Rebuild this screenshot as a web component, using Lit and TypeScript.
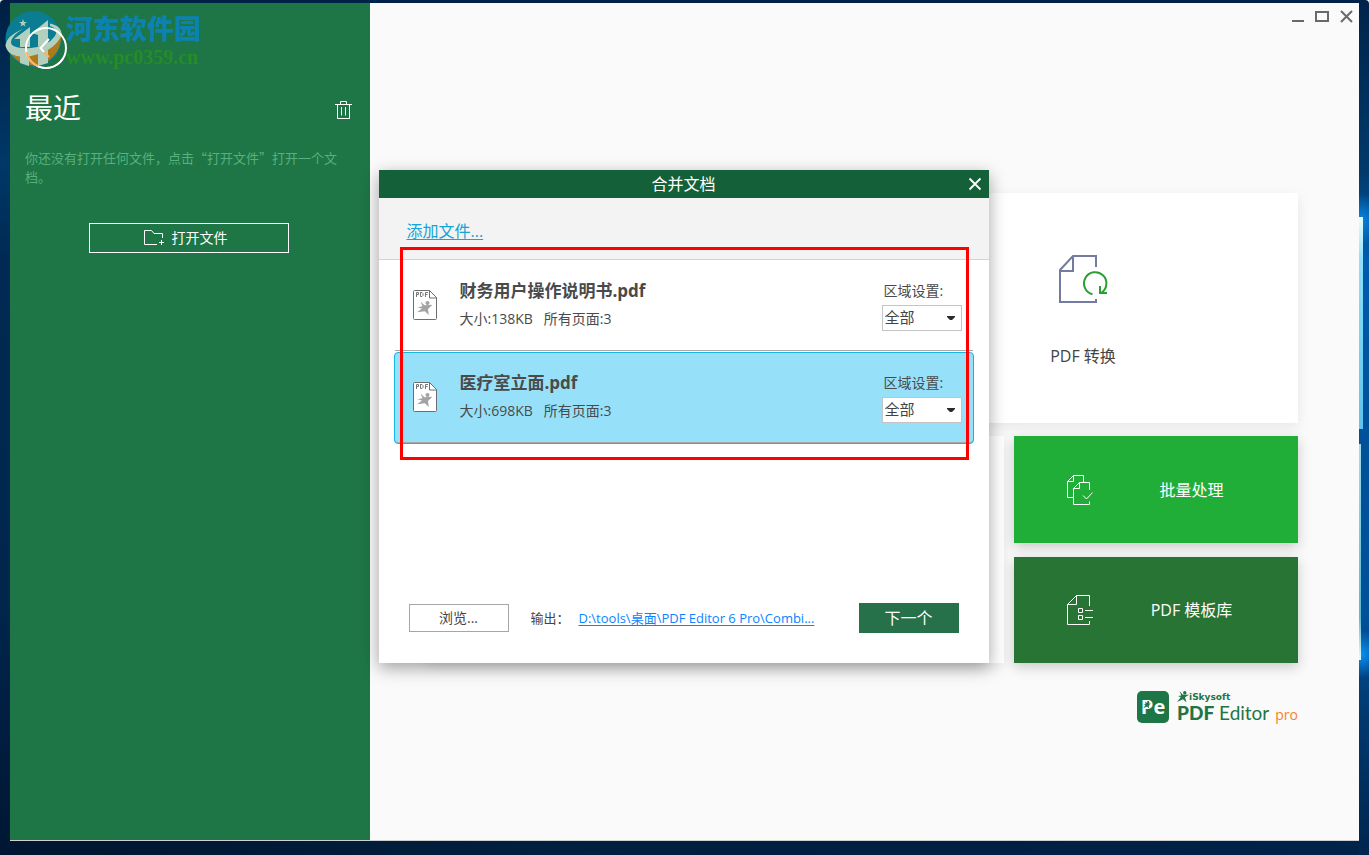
import { LitElement, html, css, svg } from "lit";
import { customElement, property, state } from "lit/decorators.js";
import { classMap } from "lit/directives/class-map.js";

interface PdfFile {
  name: string;
  size: string;
  pages: number;
}

const pdfIcon = svg`
  <svg width="26" height="32" viewBox="0 0 26 32" aria-hidden="true">
    <path d="M2.5 1.5H17.5L24.5 8.5V29.5Q24.5 30.5 23.5 30.5H2.5Q1.5 30.5 1.5 29.5V2.5Q1.5 1.5 2.5 1.5Z" fill="#fff" stroke="#6e6e6e"/>
    <path d="M17.5 1.5V9H24.5" fill="none" stroke="#6e6e6e"/>
    <g fill="none" stroke="#777" stroke-width="1">
      <path d="M4.5 8V3.5H6.5V5.5H4.5"/>
      <path d="M8.5 3V7.5H10L11 6.5V4.5L10 3.5H8.5"/>
      <path d="M13.5 8V3.5H16M13.5 5.5H15.500"/>
    </g>
    <circle cx="15.5" cy="14" r="2" fill="#a3a3a3"/>
    <path d="M8.500 12.500L12.500 16.300L20.500 15.800L16 20L16.800 26L12.800 22.300L5 23.200L10 19.400L5.500 18.200L10.500 17.200Z" fill="#a3a3a3"/>
  </svg>`;

const runner = (size: number) => svg`
  <svg width=${size} height=${size} viewBox="0 0 12 12" aria-hidden="true">
    <circle cx="7.800" cy="1.800" r="1.700" fill="#1e7545"/>
    <path d="M2.500 0L5.500 3.600L12 3.800L8 6.300L9.500 11.500L6 8.300L0 11L3.800 6.300L1 5L4.300 4.400Z" fill="#1e7545"/>
  </svg>`;

@customElement("file-row")
export class FileRow extends LitElement {
  @property({ attribute: false }) file!: PdfFile;
  @property({ type: Boolean }) selected = false;

  static styles = css`
    :host {
      display: block;
      color: #4a4a4a;
      font: 14px/20px "Open Sans", "Noto Sans CJK SC", sans-serif;
    }
    .row {
      display: flex;
      align-items: flex-start;
      box-sizing: border-box;
      height: 92px;
      padding: 28px 11px 0 17px;
      border: 1px solid transparent;
      box-shadow: inset 0 -1px #a8a8a8;
    }
    .row.selected {
      background: #96e1f9;
      border-color: #1cb4e4;
      border-radius: 4px;
    }
    .row svg {
      flex: none;
    }
    .info {
      flex: 1;
      min-width: 0;
      padding-left: 22px;
    }
    .name {
      margin: -10px 0 6px;
      font-size: 17px;
      line-height: 24px;
      font-weight: 700;
    }
    .meta {
      margin: 0;
      white-space: pre;
    }
    .range {
      display: flex;
      flex-direction: column;
      width: 80px;
      margin-top: -8px;
    }
    .range label {
      padding-left: 2px;
      margin-bottom: 4px;
    }
    .pick {
      display: grid;
      align-items: center;
      background: #fff;
      border: 1px solid #c4c4c4;
    }
    .pick select,
    .pick svg {
      grid-area: 1 / 1;
    }
    .pick svg {
      justify-self: end;
      margin-right: 6px;
      pointer-events: none;
    }
    select {
      appearance: none;
      width: 100%;
      height: 24px;
      margin: 0;
      padding: 0 20px 3px 2px;
      border: 0;
      border-radius: 0;
      background: none;
      color: #444;
      font: 15px/20px "Noto Sans CJK SC", sans-serif;
    }
  `;

  render() {
    return html`
      <div class=${classMap({ row: true, selected: this.selected })}>
        ${pdfIcon}
        <div class="info">
          <h3 class="name">${this.file.name}</h3>
          <p class="meta">${`大小:${this.file.size}   所有页面:${this.file.pages}`}</p>
        </div>
        <div class="range">
          <label for="range">区域设置:</label>
          <span class="pick">
            <select id="range"><option>全部</option></select>
            <svg width="8" height="4" viewBox="0 0 8 4" aria-hidden="true"><path d="M0 0H8V1L5 4H3L0 1Z" fill="#2b2b2b"/></svg>
          </span>
        </div>
      </div>
    `;
  }
}

@customElement("merge-dialog")
export class MergeDialog extends LitElement {
  @state() private selected = 1;

  private files: PdfFile[] = [
    { name: "财务用户操作说明书.pdf", size: "138KB", pages: 3 },
    { name: "医疗室立面.pdf", size: "698KB", pages: 3 },
  ];

  static styles = css`
    :host {
      position: relative;
      display: flex;
      flex-direction: column;
      width: 610px;
      max-width: 100%;
      background: #fff;
      box-shadow: 0 5px 16px rgba(0, 0, 0, 0.36);
      color: #444;
      font: 14px/20px "Open Sans", "Noto Sans CJK SC", sans-serif;
    }
    button {
      margin: 0;
      padding: 0;
      border: 0;
      border-radius: 0;
      background: none;
      font-family: inherit;
      cursor: pointer;
    }
    .head {
      display: grid;
      grid-template-columns: 28px 1fr 28px;
      align-items: center;
      height: 28px;
      background: #146038;
      color: #fff;
    }
    .head h2 {
      grid-column: 2;
      margin: 0;
      text-align: center;
      font-size: 16px;
      line-height: 24px;
      font-weight: 400;
    }
    .close {
      display: grid;
      place-items: center;
      height: 28px;
    }
    .tools {
      padding: 21px 28px 16px;
      background: #f3f3f3;
      border-bottom: 1px solid #d3d3d3;
      font-size: 16px;
      line-height: 24px;
    }
    .tools a {
      color: #16a3d6;
      text-underline-offset: 2px;
    }
    .list {
      flex: 1;
      min-height: 313px;
      padding: 0 15px;
    }
    .foot {
      display: flex;
      align-items: center;
      padding: 30px;
    }
    .browse {
      width: 100px;
      height: 28px;
      border: 1px solid #a6a6a6;
      color: #444;
      font-size: 14px;
      line-height: 20px;
    }
    .out {
      flex: 1;
      display: flex;
      gap: 8px;
      margin-left: 22px;
      font-size: 13px;
    }
    .out span {
      width: 40px;
    }
    .out a {
      color: #0a84ff;
      text-underline-offset: 2px;
    }
    .next {
      width: 100px;
      height: 30px;
      background: #26704a;
      color: #fff;
      font-size: 16px;
      line-height: 24px;
    }
    .mark {
      position: absolute;
      top: 77px;
      left: 21px;
      right: 20px;
      height: 207px;
      border: 3px solid #fe0000;
      pointer-events: none;
    }
  `;

  render() {
    return html`
      <div class="head">
        <h2>合并文档</h2>
        <button class="close" aria-label="关闭">
          <svg width="14" height="14" viewBox="0 0 14 14"><path d="M1.5 1.5L12.5 12.5M12.5 1.5L1.5 12.5" stroke="#fff" stroke-width="1.8"/></svg>
        </button>
      </div>
      <div class="tools"><a href="#add">添加文件...</a></div>
      <div class="list">
        ${this.files.map(
          (f, i) => html`<file-row .file=${f} ?selected=${i === this.selected} @click=${() => (this.selected = i)}></file-row>`
        )}
      </div>
      <div class="foot">
        <button class="browse">浏览...</button>
        <div class="out"><span>输出：</span><a href="#output">D:\\tools\\桌面\\PDF Editor 6 Pro\\Combi...</a></div>
        <button class="next">下一个</button>
      </div>
      <div class="mark"></div>
    `;
  }
}

@customElement("app-root")
export class AppRoot extends LitElement {
  static styles = css`
    :host {
      position: relative;
      display: flex;
      box-sizing: border-box;
      min-height: 100vh;
      padding: 3px 10px 14px;
      overflow: hidden;
      border-radius: 4px 4px 0 0;
      background:
        radial-gradient(circle at 1360px 220px, #0a84e0 0, transparent 26px),
        radial-gradient(circle at 1361px 654px, #0a90f0 0, transparent 24px),
        linear-gradient(#00234a, #003a6b 20%, #005cae 30%, #00509a 50%, #00509a 72%, #00386e 84%, #00254e) right / 10px 100% no-repeat,
        linear-gradient(#001f42, #003868 19%, #002a54 30%, #00264c 70%, #001634) left / 10px 100% no-repeat,
        linear-gradient(90deg, #001530, #00203e 40%, #001f42 70%, #00234a) bottom / 100% 14px no-repeat,
        #002148;
      font: 14px/20px "Open Sans", "Noto Sans CJK SC", sans-serif;
      color: #444;
    }
    button {
      margin: 0;
      padding: 0;
      border: 0;
      border-radius: 0;
      background: none;
      color: inherit;
      font-family: inherit;
      cursor: pointer;
    }
    button svg {
      display: block;
    }
    .beam {
      position: absolute;
      right: 6px;
      top: 217px;
      width: 4px;
      height: 212px;
      background: linear-gradient(#e8ffff, #8fe0fa 20%, #5cc4ee);
    }
    .beam.low {
      right: 8px;
      top: 444px;
      width: 2px;
      height: 216px;
      background: linear-gradient(#9fdcee, #5ab8cf 80%, #e8ffff);
    }
    .window {
      position: relative;
      flex: 1;
      display: flex;
      background: #fafafa;
      border-bottom: 1px solid #d0d0d0;
    }
    .side {
      box-sizing: border-box;
      flex: none;
      width: 360px;
      padding: 24px 18px 24px 15px;
      background: #1e7545;
      color: #fff;
    }
    .back {
      display: block;
    }
    .recent {
      display: flex;
      justify-content: space-between;
      align-items: flex-end;
      margin-top: 19px;
    }
    .recent button {
      padding-bottom: 9px;
    }
    .recent h1 {
      margin: 0;
      font-size: 28px;
      line-height: 40px;
      font-weight: 400;
    }
    .empty {
      margin: 20px 8px 0 0;
      color: #57b17f;
      font: 13px/19px "Noto Sans CJK SC", sans-serif;
    }
    .open {
      display: flex;
      align-items: center;
      justify-content: center;
      gap: 8px;
      width: 200px;
      height: 30px;
      margin: 37px auto 0;
      padding-right: 6px;
      border: 1px solid #fff;
      font-size: 14px;
      line-height: 20px;
    }
    .main {
      flex: 1;
      min-width: 0;
      display: flex;
      flex-direction: column;
    }
    .controls {
      display: flex;
      justify-content: flex-end;
      gap: 10px;
      height: 26px;
      padding: 0 6px;
    }
    .controls button {
      width: 14px;
    }
    .tiles {
      display: grid;
      gap: 13px;
      padding: 164px 61px 0 56px;
    }
    .top,
    .bottom {
      display: grid;
      grid-template-columns: 1fr 1fr;
      gap: 12px;
    }
    .bottom {
      grid-template-columns: 1fr 284px;
      gap: 10px;
    }
    .stack {
      display: grid;
      gap: 14px;
    }
    .tile {
      background: #fff;
      box-shadow: 0 4px 12px rgba(0, 0, 0, 0.08);
    }
    .convert {
      display: flex;
      flex-direction: column;
      align-items: center;
      height: 230px;
      padding-top: 60px;
      box-sizing: border-box;
      font-size: 16px;
      line-height: 24px;
    }
    .convert span {
      margin-top: 41px;
    }
    .action {
      display: flex;
      align-items: center;
      height: 107px;
      padding: 0 8px 0 53px;
      background: #21ae38;
      color: #fff;
      font-size: 16px;
      line-height: 24px;
      box-shadow: 0 4px 12px rgba(0, 0, 0, 0.2);
    }
    .action.dark {
      height: 106px;
      background: #277435;
    }
    .action span {
      flex: 1;
      text-align: center;
    }
    .brand {
      display: flex;
      align-items: flex-end;
      justify-content: flex-end;
      padding: 28px 61px 0 0;
      color: #1e7545;
    }
    .badge {
      position: relative;
      width: 32px;
      height: 32px;
      margin-right: 8px;
      border-radius: 5px;
      background: #1e7545;
      color: #fff;
      font: 700 20px/32px "Open Sans", sans-serif;
      text-align: center;
    }
    .badge svg {
      position: absolute;
      left: 6px;
      top: 10px;
    }
    .words {
      display: flex;
      flex-direction: column;
    }
    .maker {
      display: flex;
      align-items: center;
      font: 700 9px/12px "DejaVu Sans", sans-serif;
    }
    .product {
      font: 19px/20px Lato, sans-serif;
    }
    .product b {
      font-weight: 900;
    }
    .pro {
      margin-left: 6px;
      color: #f98128;
      font-size: 14px;
      line-height: 16px;
    }
    .overlay {
      position: absolute;
      inset: 0;
      display: grid;
      place-items: center;
      padding: 0 2px 10px 0;
      pointer-events: none;
    }
    merge-dialog {
      pointer-events: auto;
    }
    .watermark {
      position: absolute;
      left: 5px;
      top: 9px;
      display: flex;
      gap: 4px;
      pointer-events: none;
    }
    .site {
      display: flex;
      flex-direction: column;
      color: #0b82b0;
      font: 900 27px/38px "Noto Sans CJK SC", sans-serif;
    }
    .site span {
      color: #248c28;
      font: 700 20px/20px "Liberation Serif", serif;
    }
  `;

  render() {
    return html`
      <div class="beam"></div>
      <div class="beam low"></div>
      <div class="window">
        <aside class="side">
          <button class="back" aria-label="返回">
            <svg width="42" height="42" viewBox="0 0 42 42"><circle cx="21" cy="21" r="20" fill="none" stroke="#fff" stroke-width="2"/></svg>
          </button>
          <div class="recent">
            <h1>最近</h1>
            <button aria-label="清空">
              <svg width="17" height="18" viewBox="0 0 17 18" fill="none" stroke="#fff"><path d="M0 3.500H17M5.500 3V.5H11.500V3M2.500 4V17.500H14.500V4M6.500 6V14.500M10.500 6V14.500"/></svg>
            </button>
          </div>
          <p class="empty">你还没有打开任何文件，点击“打开文件”打开一个文档。</p>
          <button class="open">
            <svg width="20" height="16" viewBox="0 0 20 16" fill="none" stroke="#fff"><path d="M13 14.500H.5V.5H7.500L10 3.500H18.500V8M17.500 10V15M15 12.500H20"/></svg>
            打开文件
          </button>
        </aside>
        <main class="main">
          <div class="controls">
            <button aria-label="最小化"><svg width="14" height="14" viewBox="0 0 14 14"><path d="M1 12H13" stroke="#696969" stroke-width="2"/></svg></button>
            <button aria-label="最大化"><svg width="14" height="14" viewBox="0 0 14 14"><path d="M1 3H13V12H1Z" fill="none" stroke="#696969" stroke-width="2"/></svg></button>
            <button aria-label="关闭窗口"><svg width="14" height="14" viewBox="0 0 14 14"><path d="M2 2L13 13M13 2L2 13" stroke="#696969" stroke-width="2"/></svg></button>
          </div>
          <div class="tiles">
            <div class="top">
              <div class="tile"></div>
              <button class="tile convert">
                <svg width="50" height="50" viewBox="0 0 50 50" fill="none" stroke-width="2">
                  <path d="M38 14V3H15L2 17V49H38V46M15 3V18H2" stroke="#747ba3"/>
                  <path d="M34.500 41.300A11.200 11.200 0 1 1 43 40" stroke="#2aa033"/>
                  <path d="M42 33V40H49" stroke="#2aa033"/>
                </svg>
                <span>PDF 转换</span>
              </button>
            </div>
            <div class="bottom">
              <div class="tile"></div>
              <div class="stack">
                <button class="action">
                  <svg width="26" height="30" viewBox="0 0 26 30" fill="none" stroke="#fff">
                    <path d="M6 22.500H.5V6.500L6.500.5H16.500V7M6.500.5V6.500H.5"/>
                    <path d="M22.500 15V7.500H12.500L6.500 13.500V29.500H22.500V26.500M12.500 7.500V13.500H6.500M16 20.500L19.500 24L25.500 17.500"/>
                  </svg>
                  <span>批量处理</span>
                </button>
                <button class="action dark">
                  <svg width="26" height="30" viewBox="0 0 26 30" fill="none" stroke="#fff">
                    <path d="M22.500 11V.5H9.500L.5 9.500V29.500H22.500V26M9.500.5V9.500H.5"/>
                    <path d="M11.500 13.500H15.500V17.500H11.500ZM11.500 20.500H15.500V24.500H11.500ZM18 15.500H26M18 22.500H26"/>
                  </svg>
                  <span>PDF 模板库</span>
                </button>
              </div>
            </div>
          </div>
          <div class="brand">
            <div class="badge">Pe${runner(8)}</div>
            <div class="words">
              <span class="maker">${runner(12)}iSkysoft</span>
              <span class="product"><b>PDF</b> Editor</span>
            </div>
            <span class="pro">pro</span>
          </div>
        </main>
        <div class="overlay"><merge-dialog role="dialog" aria-label="合并文档"></merge-dialog></div>
      </div>
      <div class="watermark">
        <svg width="57" height="60" viewBox="0 0 57 60" aria-hidden="true">
          <circle cx="28.500" cy="30" r="28" transform="translate(0 0)" fill="#0b7d93"/>
          <path d="M1.500 37A28 28 0 0 0 56 26Q44 44 24 42Q8 42 1.500 37Z" fill="#ad7b1b"/>
          <path d="M18 20Q1 27 .5 37Q4 50 26 47Q50 42 56.500 26Q57 17 45 14.500V17Q54 20 50 27Q43 37 26 39Q6 40 6 33Q7 26 18 20Z" fill="#b3cfbd"/>
          <path d="M9 30L25 18V38H15V30ZM15 44H24V57L15 54ZM27 24L43 11V34L33 38V26ZM33 44L43 41V54L33 57Z" fill="#b3cfbd"/>
          <path d="M18 10L19 13H22L19.500 14.800L20.500 17.500L18 16L15.500 17.500L16.500 14.800L14 13H17Z" fill="#b3cfbd"/>
          <circle cx="41" cy="39" r="20" fill="none" stroke="#fff" stroke-width="2"/>
          <path d="M44 30L35.500 39L39 43" fill="none" stroke="#fff" stroke-width="2"/>
          <path d="M39 43L44 48M21.500 43Q24 54 33 57" fill="none" stroke="#ffb060" stroke-width="2"/>
        </svg>
        <div class="site">河东软件园<span>www.pc0359.cn</span></div>
      </div>
    `;
  }
}
